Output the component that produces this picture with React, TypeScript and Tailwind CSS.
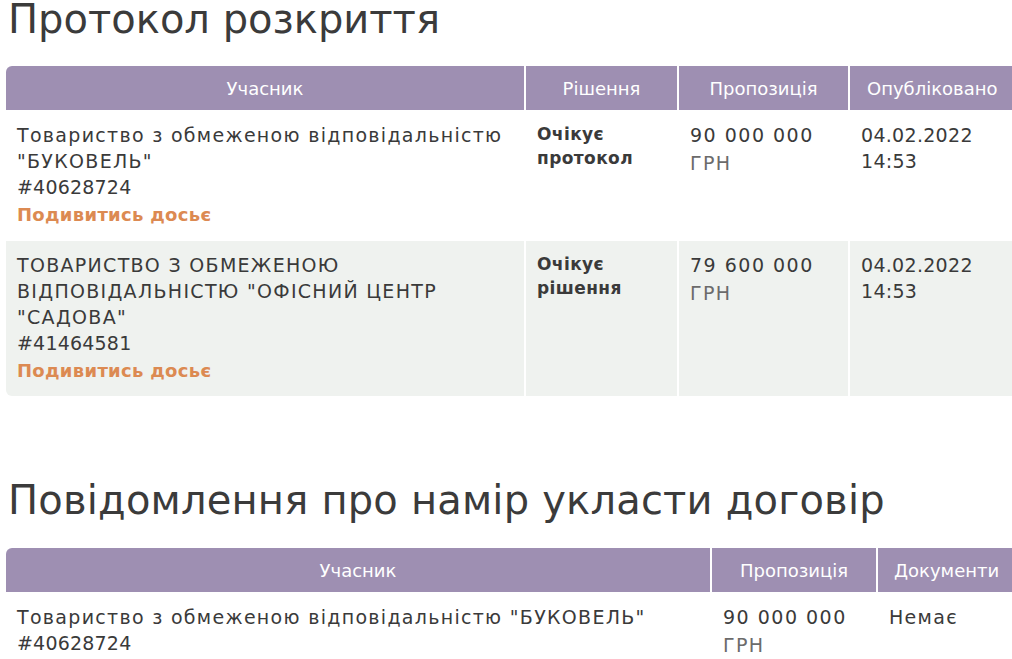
const BODY = "font-['DejaVu_Sans',sans-serif]";

type Bid = {
  name: string[];
  code: string;
  status: string[];
  amount: string;
  date: string;
  time: string;
};

const BIDS: Bid[] = [
  {
    name: ["Товариство з обмеженою відповідальністю", "\"БУКОВЕЛЬ\""],
    code: "#40628724",
    status: ["Очікує", "протокол"],
    amount: "90 000 000",
    date: "04.02.2022",
    time: "14:53",
  },
  {
    name: ["ТОВАРИСТВО З ОБМЕЖЕНОЮ", "ВІДПОВІДАЛЬНІСТЮ \"ОФІСНИЙ ЦЕНТР", "\"САДОВА\""],
    code: "#41464581",
    status: ["Очікує", "рішення"],
    amount: "79 600 000",
    date: "04.02.2022",
    time: "14:53",
  },
];

function Th({ children, className = "" }: { children: React.ReactNode; className?: string }) {
  return (
    <div className={`flex h-[44px] items-center justify-center bg-[#9e8fb2] text-[18px] tracking-normal text-white ${className}`}>
      {children}
    </div>
  );
}

function Amount({ value }: { value: string }) {
  return (
    <div>
      <div className="leading-[26px] tracking-[1.5px]">{value}</div>
      <div className="mt-[2px] leading-[26px] text-[#6b6b6b]">ГРН</div>
    </div>
  );
}

export default function App() {
  return (
    <div className={`h-[659px] w-[1012px] overflow-hidden bg-white text-[#3a3a3a] ${BODY}`}>
      <h1 className="pl-[8px] text-[40px] leading-[38px] text-[#3b3b3b]">Протокол розкриття</h1>

      <div className="mt-[28px] ml-[6px] grid w-[1040px] grid-cols-[518px_151px_169px_1fr] gap-x-[2px] text-[19px] tracking-[1.3px]">
        <Th className="rounded-tl-[6px]">Учасник</Th>
        <Th>Рішення</Th>
        <Th>Пропозиція</Th>
        <Th className="justify-start pl-[17px]">Опубліковано</Th>

        {BIDS.map((bid, i) => {
          const bg = i % 2 === 1 ? "bg-[#eff2ef]" : "bg-white";
          const last = i === BIDS.length - 1;
          return [
            <div key={`n${i}`} className={`mt-px px-[11px] pt-[11px] pb-[12px] ${bg} ${last ? "rounded-bl-[6px]" : ""}`}>
              {bid.name.map((line) => (
                <div key={line} className="leading-[26px]">{line}</div>
              ))}
              <div className="leading-[26px] tracking-[0.2px]">{bid.code}</div>
              <a className="mt-[2px] block text-[18px] leading-[26px] font-semibold tracking-[0.3px] text-[#dc8a52]">Подивитись досьє</a>
            </div>,
            <div key={`s${i}`} className={`mt-px px-[11px] pt-[11px] text-[17px] font-bold tracking-[0.4px] ${bg}`}>
              {bid.status.map((line) => (
                <div key={line} className="leading-[24px]">{line}</div>
              ))}
            </div>,
            <div key={`a${i}`} className={`mt-px px-[11px] pt-[11px] ${bg}`}>
              <Amount value={bid.amount} />
            </div>,
            <div key={`d${i}`} className={`mt-px px-[11px] pt-[11px] tracking-[0.3px] ${bg}`}>
              <div className="leading-[26px]">{bid.date}</div>
              <div className="leading-[26px]">{bid.time}</div>
            </div>,
          ];
        })}
      </div>

      <h2 className="mt-[80px] pl-[8px] text-[40px] leading-[48px] tracking-[0.2px] text-[#3b3b3b]">
        Повідомлення про намір укласти договір
      </h2>

      <div className="mt-[24px] ml-[6px] grid w-[1040px] grid-cols-[704px_164px_1fr] gap-x-[2px] text-[19px] tracking-[1.3px]">
        <Th className="rounded-tl-[6px]">Учасник</Th>
        <Th>Пропозиція</Th>
        <Th className="justify-start pl-[16px]">Документи</Th>

        <div className="mt-px px-[11px] pt-[11px]">
          <div className="leading-[26px]">Товариство з обмеженою відповідальністю "БУКОВЕЛЬ"</div>
          <div className="leading-[26px] tracking-[0.2px]">#40628724</div>
        </div>
        <div className="mt-px px-[11px] pt-[11px]">
          <Amount value="90 000 000" />
        </div>
        <div className="mt-px px-[11px] pt-[11px]">
          <div className="leading-[26px]">Немає</div>
        </div>
      </div>
    </div>
  );
}
